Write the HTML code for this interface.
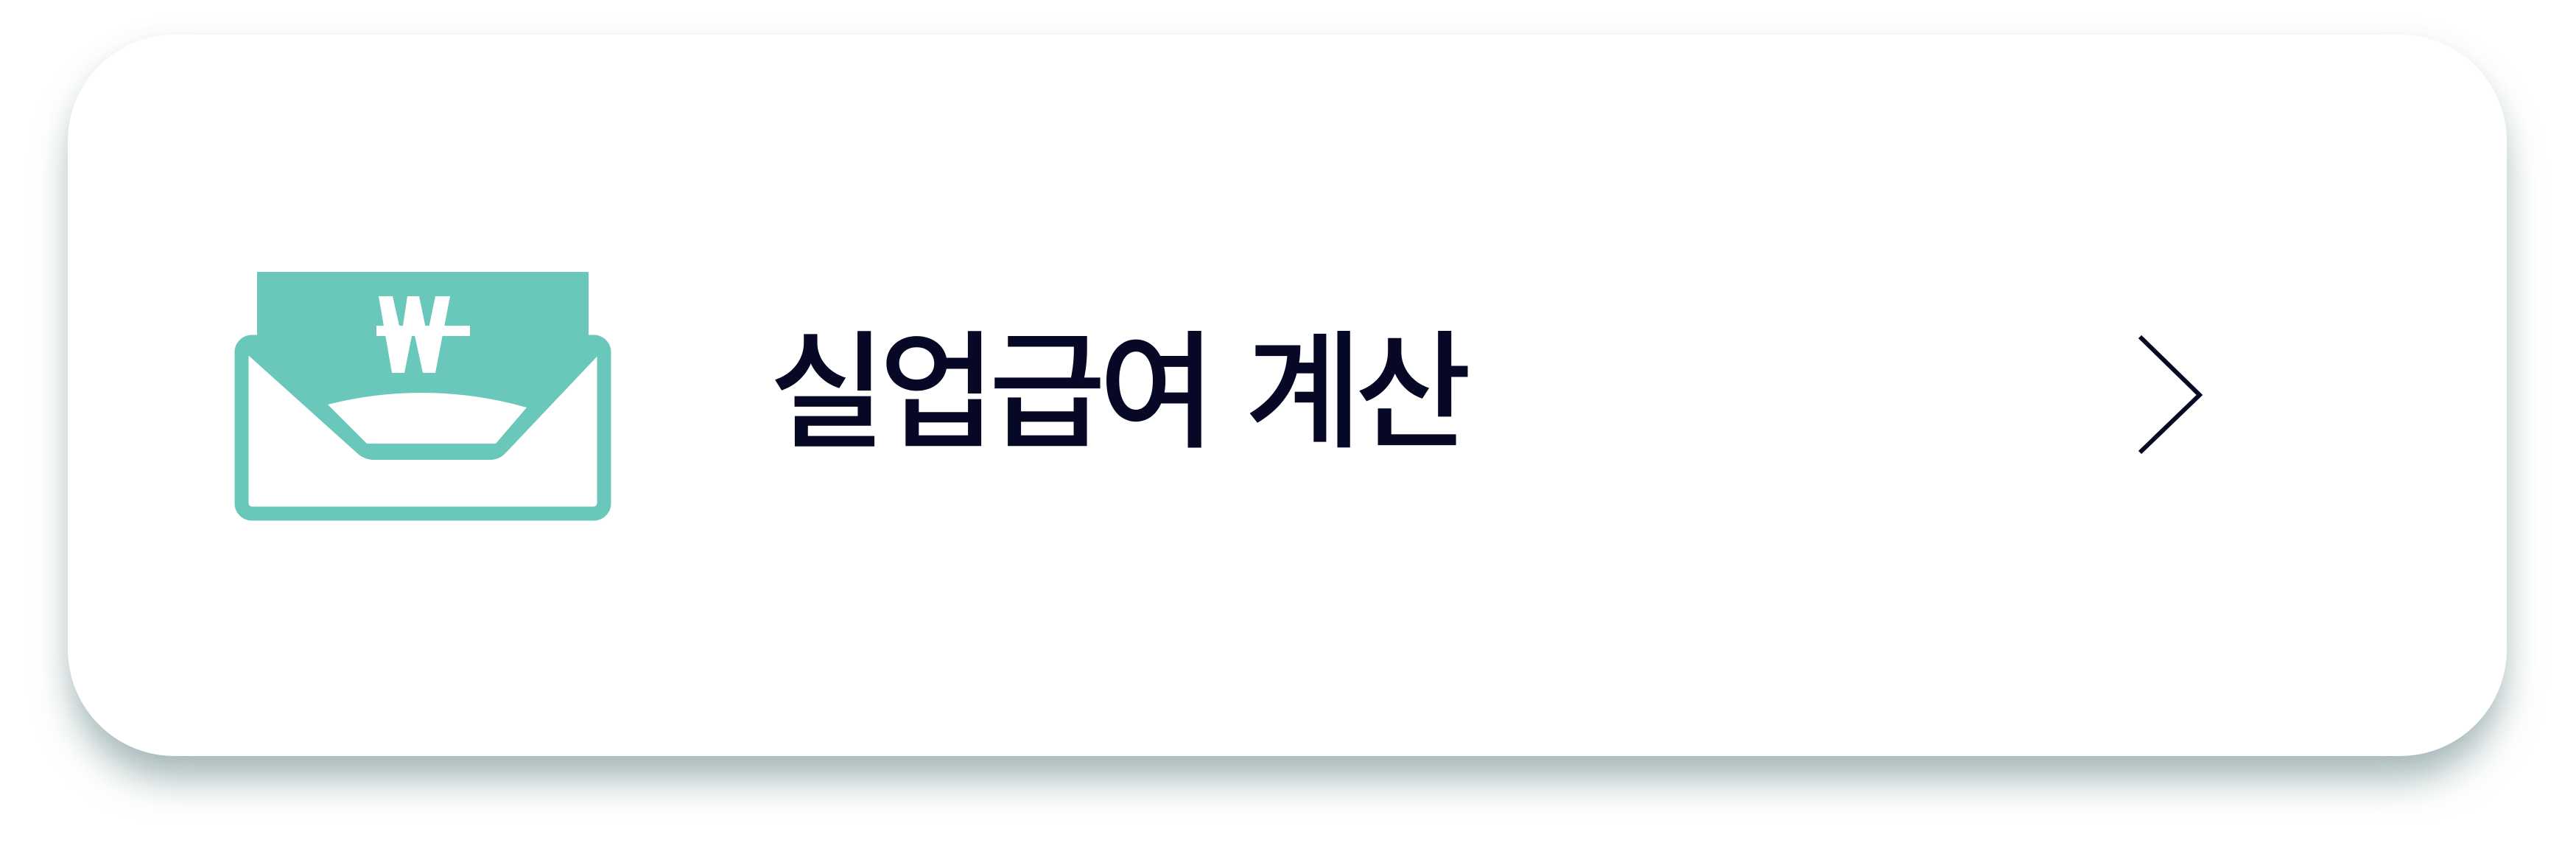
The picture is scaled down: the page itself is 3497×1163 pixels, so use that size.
<!DOCTYPE html>
<html><head><meta charset="utf-8"><style>
html,body{margin:0;padding:0;background:#fff;width:3497px;height:1163px;overflow:hidden;position:relative}
.card{position:absolute;left:92px;top:47px;width:3311px;height:979px;background:#fff;border-radius:145px;box-shadow:0 38px 50px -6px rgba(110,140,140,.6),0 0 30px rgba(150,170,170,.12)}
.t{position:absolute;left:1044px;top:447px;height:173px;line-height:173px;font-size:173px;font-weight:500;letter-spacing:-10px;word-spacing:11px;color:#060826;font-family:"Liberation Sans","Noto Sans CJK KR",sans-serif;white-space:nowrap}
svg{position:absolute;left:0;top:0}
</style></head><body>
<div class="card"></div>
<svg width="3497" height="1163" viewBox="0 0 3497 1163">
 <rect x="349" y="369" width="450" height="110" fill="#69c8b9"/>
 <path d="M336,462 L812,462 L812,480 L668,615 L500,615 L336,480 Z" fill="#69c8b9"/>
 <rect x="328" y="464" width="492" height="233" rx="14" fill="none" stroke="#69c8b9" stroke-width="19"/>
 <path d="M343,474 L492,608 Q499,614 508,614 L665,614 Q674,614 680,607 L806,474" fill="none" stroke="#69c8b9" stroke-width="20" stroke-linejoin="round"/>
 <path d="M445,549 Q580,515 715,553 L673,602 L498,602 Z" fill="#fff"/>
 <g fill="#fff">
  <path d="M514,402 L533,402 L545,455 L553,402 L569,402 L580,455 L591,402 L611,402 L591,506 L574,506 L561,446 L549,506 L532,506 Z"/>
  <rect x="511" y="442" width="127" height="14"/>
 </g>
 <polyline points="2905,457 2986,536 2905,614" fill="none" stroke="#060826" stroke-width="6"/>
</svg>
<div class="t">실업급여 계산</div>
</body></html>
